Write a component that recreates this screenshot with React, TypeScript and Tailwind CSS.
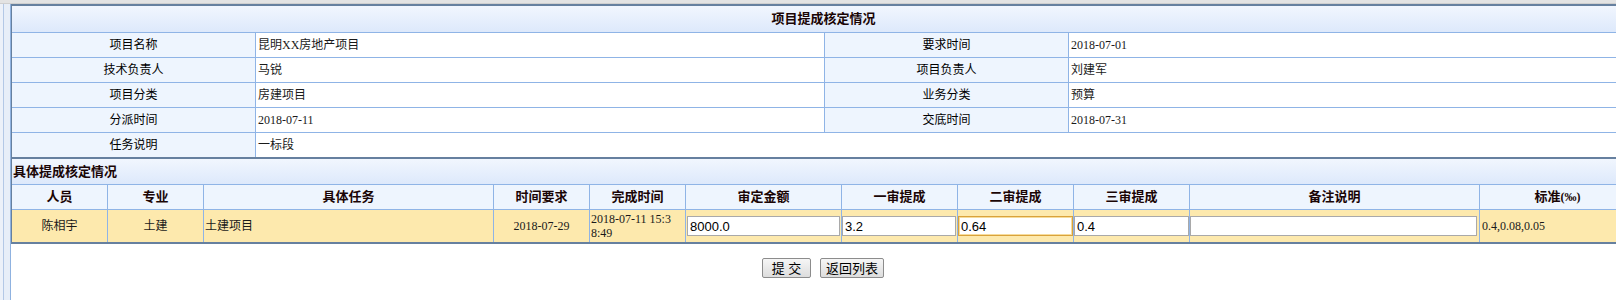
import React from "react";

const serif = "font-['Liberation_Serif','Noto_Sans_CJK_SC',serif]";
const sans = "font-['Liberation_Sans','Noto_Sans_CJK_SC',sans-serif]";

const labelCell =
  "flex items-center justify-center bg-[#eef5fe] border-r border-[#8fb4e6] shrink-0";
const valueCell = "flex items-center pl-[2px] bg-white text-[#1a1a1a]";

type InfoProps = {
  l1: string;
  v1: string;
  l2: string;
  v2: string;
};

function InfoRow({ l1, v1, l2, v2 }: InfoProps) {
  return (
    <div className="flex h-[25px] border-b border-[#8fb4e6]">
      <div className={`${labelCell} w-[244px]`}>{l1}</div>
      <div className={`${valueCell} w-[569px] border-r border-[#8fb4e6] shrink-0`}>{v1}</div>
      <div className={`${labelCell} w-[244px]`}>{l2}</div>
      <div className={`${valueCell} flex-1`}>{v2}</div>
    </div>
  );
}

const cols = [
  { w: "w-[96px]", title: "人员" },
  { w: "w-[96px]", title: "专业" },
  { w: "w-[290px]", title: "具体任务" },
  { w: "w-[96px]", title: "时间要求" },
  { w: "w-[96px]", title: "完成时间" },
  { w: "w-[156px]", title: "审定金额" },
  { w: "w-[116px]", title: "一审提成" },
  { w: "w-[116px]", title: "二审提成" },
  { w: "w-[116px]", title: "三审提成" },
  { w: "w-[290px]", title: "备注说明" },
];

const inputBase = `${sans} h-[20px] bg-white border border-[#a9a9a9] px-[2px] text-[13px] text-black outline-none`;

export default function App() {
  return (
    <div className={`w-[1616px] h-[300px] overflow-hidden bg-white flex flex-col ${serif} text-[12px] text-black`}>
      <div className="h-[4px] w-full bg-[#e3e3e3] border-b border-[#cfcfcf] shrink-0" />
      <div className="flex flex-1">
        {/* left frame strip */}
        <div className="flex w-[11px] shrink-0">
          <div className="w-[3px] bg-[#ecf1f9]" />
          <div className="w-px bg-[#b3c8e6]" />
          <div className="w-[6px] bg-[#e7eef8]" />
          <div className="w-px bg-[#8fb2e0]" />
        </div>

        <div className="w-[1624px] shrink-0 flex flex-col">
          <div className="border-l border-t-2 border-[#66809f]">
            {/* title */}
            <div className="h-[27px] flex items-center justify-center border-b border-[#8fb4e6] bg-gradient-to-b from-[#f1f6fe] to-[#dde9fb] text-[13px] font-bold text-[#1a0505]">
              项目提成核定情况
            </div>

            <InfoRow l1="项目名称" v1="昆明XX房地产项目" l2="要求时间" v2="2018-07-01" />
            <InfoRow l1="技术负责人" v1="马锐" l2="项目负责人" v2="刘建军" />
            <InfoRow l1="项目分类" v1="房建项目" l2="业务分类" v2="预算" />
            <InfoRow l1="分派时间" v1="2018-07-11" l2="交底时间" v2="2018-07-31" />

            <div className="flex h-[26px] border-b-2 border-[#66809f]">
              <div className={`${labelCell} w-[244px]`}>任务说明</div>
              <div className={`${valueCell} flex-1`}>一标段</div>
            </div>

            {/* detail section */}
            <div className="h-[26px] flex items-center pl-[1px] border-b border-[#8fb4e6] bg-gradient-to-b from-[#f1f6fe] to-[#dde9fb] text-[13px] font-bold text-[#1a0505]">
              具体提成核定情况
            </div>

            <div className="flex h-[25px] border-b border-[#8fb4e6] bg-[#eef5fe] text-[13px] font-bold text-[#1a0505]">
              {cols.map((c) => (
                <div
                  key={c.title}
                  className={`${c.w} shrink-0 flex items-center justify-center border-r border-[#8fb4e6]`}
                >
                  {c.title}
                </div>
              ))}
              <div className="flex-1 flex items-center justify-center">
                标准<span className="text-[12px]">(‰)</span>
              </div>
            </div>

            <div className="flex h-[34px] border-b-2 border-[#66809f] bg-[#fde9ad] text-[#1a1a1a]">
              <div className="w-[96px] shrink-0 flex items-center justify-center border-r border-[#8fb4e6]">陈相宇</div>
              <div className="w-[96px] shrink-0 flex items-center justify-center border-r border-[#8fb4e6]">土建</div>
              <div className="w-[290px] shrink-0 flex items-center pl-[1px] border-r border-[#8fb4e6]">土建项目</div>
              <div className="w-[96px] shrink-0 flex items-center justify-center border-r border-[#8fb4e6]">2018-07-29</div>
              <div className="w-[96px] shrink-0 flex items-center pl-[1px] pr-[12px] leading-[14px] border-r border-[#8fb4e6] break-all">
                2018-07-11 15:38:49
              </div>
              <div className="w-[156px] shrink-0 flex items-center pl-[1px] border-r border-[#8fb4e6]">
                <input readOnly value="8000.0" className={`${inputBase} w-[153px]`} />
              </div>
              <div className="w-[116px] shrink-0 flex items-center border-r border-[#8fb4e6]">
                <input readOnly value="3.2" className={`${inputBase} w-[114px]`} />
              </div>
              <div className="w-[116px] shrink-0 flex items-center border-r border-[#8fb4e6]">
                <input
                  readOnly
                  value="0.64"
                  className={`${inputBase} w-[115px] border-[#d9a23c] shadow-[inset_0_0_0_1px_#f6dc9c]`}
                />
              </div>
              <div className="w-[116px] shrink-0 flex items-center border-r border-[#8fb4e6]">
                <input readOnly value="0.4" className={`${inputBase} w-[115px]`} />
              </div>
              <div className="w-[290px] shrink-0 flex items-center border-r border-[#8fb4e6]">
                <input readOnly value="" className={`${inputBase} w-[287px]`} />
              </div>
              <div className="flex-1 flex items-center pl-[2px]">0.4,0.08,0.05</div>
            </div>
          </div>

          {/* actions */}
          <div className="flex justify-center gap-[9px] mt-[14px]">
            <button
              type="button"
              className={`${sans} w-[49px] h-[20px] rounded-[2px] border border-[#8c8c8c] bg-gradient-to-b from-[#f6f6f6] to-[#dddddd] text-[13px] text-black leading-none`}
            >
              提 交
            </button>
            <button
              type="button"
              className={`${sans} w-[64px] h-[20px] rounded-[2px] border border-[#8c8c8c] bg-gradient-to-b from-[#f6f6f6] to-[#dddddd] text-[13px] text-black leading-none`}
            >
              返回列表
            </button>
          </div>
        </div>
      </div>
    </div>
  );
}
